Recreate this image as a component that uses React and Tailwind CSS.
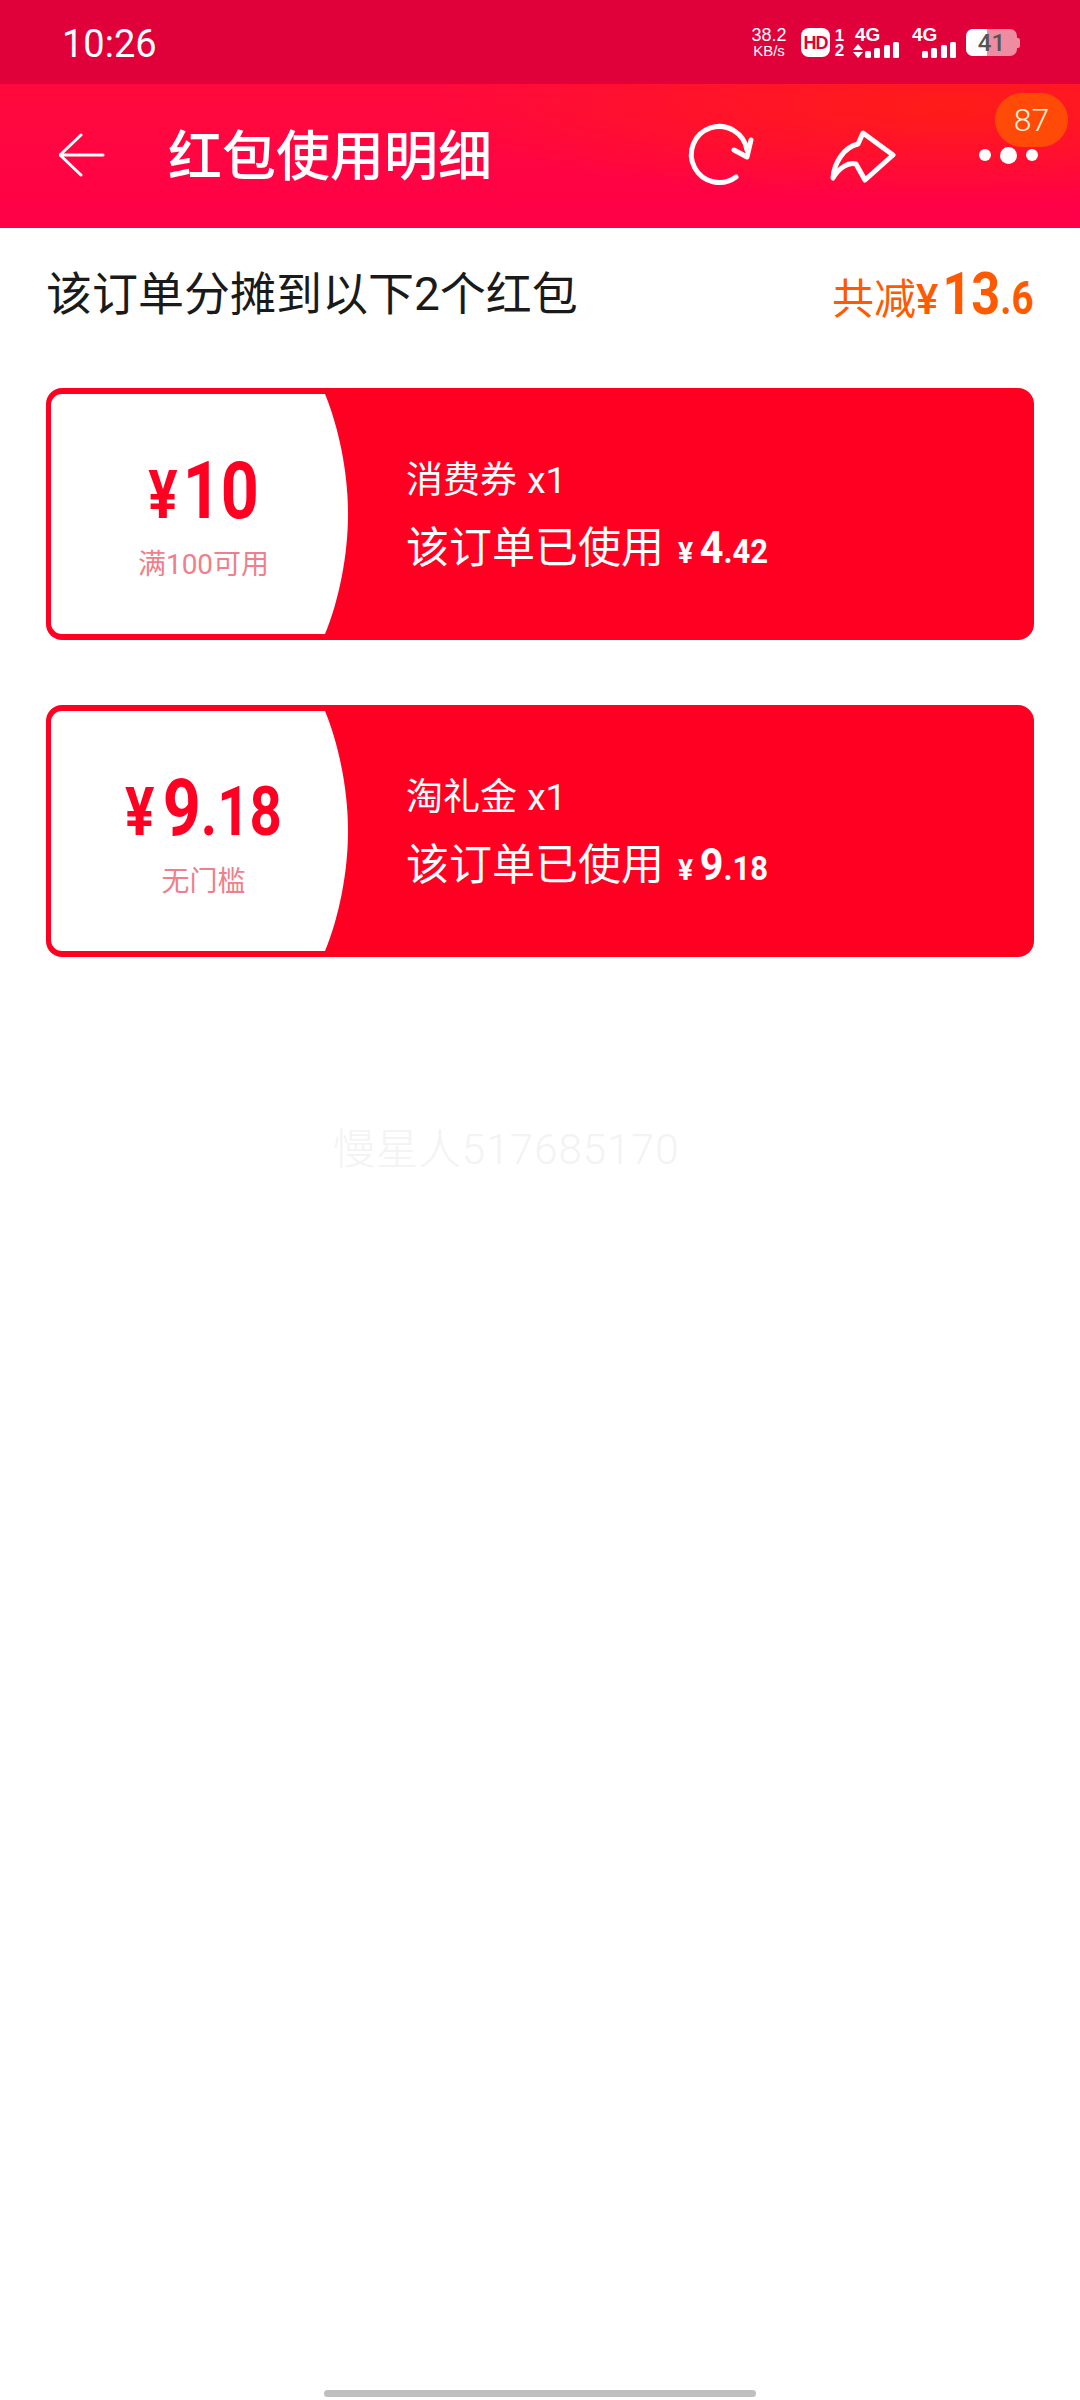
const cjk = "font-['Roboto','Noto_Sans_CJK_SC',sans-serif]";
const num = "font-['Roboto','Noto_Sans_CJK_SC',sans-serif]";
const lib = "font-['Liberation_Sans',sans-serif]";

function Bars() {
  return (
    <svg width="34" height="16" viewBox="0 0 34 16" fill="#fff" className="block">
      <rect x="0" y="9" width="6" height="7" rx="1.5" />
      <rect x="9" y="6" width="6" height="10" rx="1.5" />
      <rect x="19" y="3" width="6" height="13" rx="1.5" />
      <rect x="28" y="0" width="6" height="16" rx="1.5" />
    </svg>
  );
}

function StatusBar() {
  return (
    <div className="h-[84px] bg-[#e0003a] flex items-center text-white">
      <div className="ml-[62px] mt-[4px] text-[38px] leading-none font-normal font-['Roboto',sans-serif]">10:26</div>
      <div className="ml-auto mr-[60px] flex items-center h-[30px] mt-[1px]">
        <div className={`flex flex-col items-center w-[38px] ${lib} mr-[13px]`}>
          <span className="text-[18px] leading-[16px]">38.2</span>
          <span className="text-[15px] leading-[15px]">KB/s</span>
        </div>
        <div className="w-[29px] h-[29px] bg-white rounded-[8px] flex items-center justify-center text-[#e0003a] font-['Liberation_Sans',sans-serif] font-bold text-[18px] leading-none tracking-[-1px]">HD</div>
        <div className={`flex flex-col w-[9px] ml-[5px] items-center ${lib} font-bold text-[17px] leading-[15px]`}>
          <span>1</span>
          <span>2</span>
        </div>
        <div className="ml-[9px] w-[46px] flex flex-col">
          <span className={`${lib} ml-[2px] font-bold text-[19px] leading-[15px]`}>4G</span>
          <div className="flex items-end">
            <svg width="10" height="14" viewBox="0 0 10 14" fill="#fff" className="mr-[2px]"><path d="M5 0L10 6H0zM0 8h10l-5 6z" /></svg>
            <Bars />
          </div>
        </div>
        <div className="ml-[13px] w-[44px] flex flex-col">
          <span className={`${lib} font-bold text-[19px] leading-[15px]`}>4G</span>
          <div className="flex justify-end"><Bars /></div>
        </div>
        <div className="ml-[10px] relative w-[51px] h-[27px] rounded-[7px] bg-[#ee8ca2] overflow-hidden">
          <div className="absolute left-0 top-0 bottom-0 w-[21px] bg-white" />
          <div className="absolute inset-0 flex items-center justify-center font-['Roboto',sans-serif] text-[#555] text-[24px] font-medium leading-none">41</div>
        </div>
        <div className="w-[3px] h-[10px] bg-[#ee8ca2] rounded-r-[2px]" />
      </div>
    </div>
  );
}

function Header() {
  return (
    <div className="relative h-[144px] flex items-center text-white bg-[radial-gradient(ellipse_520px_95px_at_88%_15%,#ff1c18,transparent),linear-gradient(#ff0a3c,#ff0048)]">
      <svg width="46" height="44" viewBox="0 0 46 44" fill="none" stroke="#fff" strokeWidth="3" strokeLinecap="round" strokeLinejoin="round" className="ml-[59px] mt-[-2px]">
        <path d="M22 2L1 22L22 42M1 22H44" />
      </svg>
      <div className={`ml-[63px] text-[54px] leading-none ${cjk} font-medium mt-[4px]`}>红包使用明细</div>
      <div className="ml-auto flex items-center mr-[42px] mt-[-2px]">
        <svg width="70" height="70" viewBox="0 0 70 70" fill="none" stroke="#fff" strokeWidth="5" strokeLinecap="round" strokeLinejoin="round">
          <path d="M52 57A28 28 0 1 1 63 30" />
          <path d="M50 30L63 37L67 20" />
        </svg>
        <svg width="70" height="60" viewBox="0 0 70 60" fill="none" stroke="#fff" strokeWidth="5" strokeLinecap="round" strokeLinejoin="round" className="ml-[74px]">
          <path d="M5 53C6 38 16 22 30 19L35 8L65 30L37 55L28 39C20 37 11 43 5 53Z" />
        </svg>
        <div className="ml-[81px] flex items-center gap-[9px]">
          <div className="w-[12px] h-[12px] rounded-full bg-white" />
          <div className="w-[17px] h-[17px] rounded-full bg-white" />
          <div className="w-[12px] h-[12px] rounded-full bg-white" />
        </div>
      </div>
      <div className="absolute right-[12px] top-[9px] w-[73px] h-[54px] rounded-[27px] bg-[#ff4a08] flex items-center justify-center text-[#fff3d6] text-[32px] leading-none font-['Roboto',sans-serif] font-light">87</div>
    </div>
  );
}

function Coupon({ big, small, note, name, usedBig, usedSmall, wide }) {
  return (
    <div className="h-[252px] rounded-[16px] bg-[#ff0022] flex relative">
      <div className="relative w-[306px] h-full shrink-0 flex flex-col items-center">
        <svg width="306" height="252" viewBox="0 0 306 252" className="absolute inset-0" fill="#fff">
          <path d="M16 6H279C293 40 302 85 302 126C302 167 293 212 279 246H16A11 11 0 0 1 5 235V17A11 11 0 0 1 16 6Z" />
        </svg>
        <div className={`relative mt-[61px] ml-[10px] h-[84px] flex items-baseline justify-center text-[#ff0022] font-bold ${num} scale-x-[.83] whitespace-nowrap`}>
          <span className="text-[66px] leading-[84px]">¥</span>
          <span className={`text-[80px] leading-[84px] ${wide ? "ml-[10px]" : "ml-[6px]"}`}>{big}</span>
          {small && <span className="text-[68px] leading-[84px]">{small}</span>}
        </div>
        <div className={`relative mt-[14px] ml-[9px] text-[28px] leading-[36px] text-[#ef7f8a] ${cjk}`}>{note}</div>
      </div>
      <div className="ml-[54px] flex flex-col text-white">
        <div className={`mt-[73px] text-[37px] leading-[40px] ${cjk}`}>{name} <span className="ml-[1px]">x1</span></div>
        <div className="mt-[14px] flex items-baseline h-[50px]">
          <span className={`text-[43px] leading-[50px] ${cjk}`}>该订单已使用</span>
          <div className={`ml-[14px] flex items-baseline font-bold ${num} origin-left scale-x-[.94] whitespace-nowrap`}>
            <span className="text-[30px]">¥</span>
            <span className="ml-[7px] text-[44px]">{usedBig}</span>
            <span className="text-[33px]">{usedSmall}</span>
          </div>
        </div>
      </div>
    </div>
  );
}

export default function App() {
  return (
    <div className={`w-[1080px] min-h-[2400px] bg-white flex flex-col relative ${cjk}`}>
      <StatusBar />
      <Header />
      <div className="px-[46px]">
        <div className="h-[160px] flex items-start justify-between">
          <div className="mt-[36px] text-[46px] leading-[60px] text-[#1a1a1a]">该订单分摊到以下2个红包</div>
          <div className="mt-[36px] flex items-baseline text-[#ff5a00] leading-[60px]">
            <span className="text-[42px]">共减</span>
            <span className="text-[42px] font-medium">¥</span>
            <div className="ml-[-13px] flex items-baseline origin-right scale-x-[.84] font-bold">
              <span className="text-[60px]">13</span>
              <span className="text-[46px]">.6</span>
            </div>
          </div>
        </div>
        <div className="flex flex-col gap-[65px]">
          <Coupon big="10" note="满100可用" name="消费券" usedBig="4" usedSmall=".42" />
          <Coupon big="9" small=".18" note="无门槛" name="淘礼金" usedBig="9" usedSmall=".18" wide />
        </div>
        <div className="mt-[168px] ml-[287px] text-[42px] leading-[50px] text-[#f3f3f3] font-light tracking-[0.9px]">慢星人517685170</div>
      </div>
      <div className="mt-auto mb-[3px] mx-auto w-[432px] h-[7px] rounded-full bg-[#bfbfbf]" />
    </div>
  );
}
